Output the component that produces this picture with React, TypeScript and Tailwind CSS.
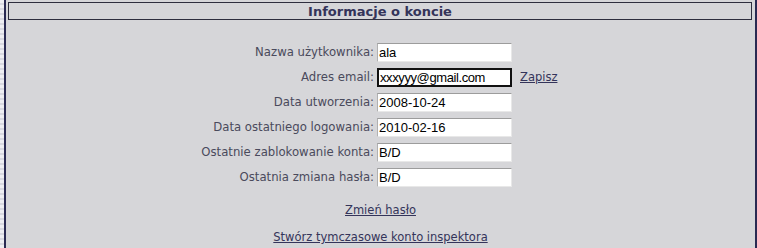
import React from "react";

const rows: { label: string; value: string; focused?: boolean; action?: string }[] = [
  { label: "Nazwa użytkownika:", value: "ala" },
  { label: "Adres email:", value: "xxxyyy@gmail.com", focused: true, action: "Zapisz" },
  { label: "Data utworzenia:", value: "2008-10-24" },
  { label: "Data ostatniego logowania:", value: "2010-02-16" },
  { label: "Ostatnie zablokowanie konta:", value: "B/D" },
  { label: "Ostatnia zmiana hasła:", value: "B/D" },
];

export default function App() {
  return (
    <div className="flex w-[757px] h-[248px] overflow-hidden bg-[#d6d6d9]" style={{ fontFamily: '"DejaVu Sans", Verdana, sans-serif' }}>
      <div className="w-[4px] bg-[repeating-linear-gradient(180deg,#eeeef2_0px,#eeeef2_3px,#d8d8e0_3px,#d8d8e0_5px)]" />
      <div className="w-[2px] bg-[#2a2a52]" />
      <div className="flex-1 flex flex-col pt-[2px]">
        <div className="ml-[2px] mr-[3px] h-[18px] border border-[#2e2e3e] flex items-center justify-center">
          <span className="text-[13px] font-bold text-[#34345a] leading-none">Informacje o koncie</span>
        </div>
        <div className="flex flex-col gap-[6px] mt-[23px] pl-[194px]">
          {rows.map((r) => (
            <div key={r.label} className="flex items-center h-[19px]">
              <div className="w-[174px] text-right text-[11.7px] text-[#4a4a5c] whitespace-nowrap">{r.label}</div>
              <div
                className={
                  "ml-[3px] w-[135px] h-[19px] bg-white flex items-center px-[1px] text-[13px] text-black " +
                  (r.focused
                    ? "border-2 border-[#111]"
                    : "border border-t-[#9c9c9c] border-l-[#b0b0b0] border-r-[#e8e8e8] border-b-[#e8e8e8]")
                }
                style={{ fontFamily: '"Liberation Sans", Arial, sans-serif' }}
              >
                <span className={r.focused ? "tracking-[-0.4px]" : ""}>{r.value}</span>
              </div>
              {r.action && (
                <a className="ml-[8px] text-[11.5px] text-[#34345a] underline cursor-pointer">{r.action}</a>
              )}
            </div>
          ))}
        </div>
        <div className="flex flex-col items-center mt-[16px] gap-[13px]">
          <a className="text-[11.5px] text-[#34345a] underline leading-[14px] cursor-pointer">Zmień hasło</a>
          <a className="text-[11.5px] text-[#34345a] underline leading-[14px] cursor-pointer">Stwórz tymczasowe konto inspektora</a>
        </div>
      </div>
      <div className="w-[2px] bg-[#2a2a52]" />
    </div>
  );
}
